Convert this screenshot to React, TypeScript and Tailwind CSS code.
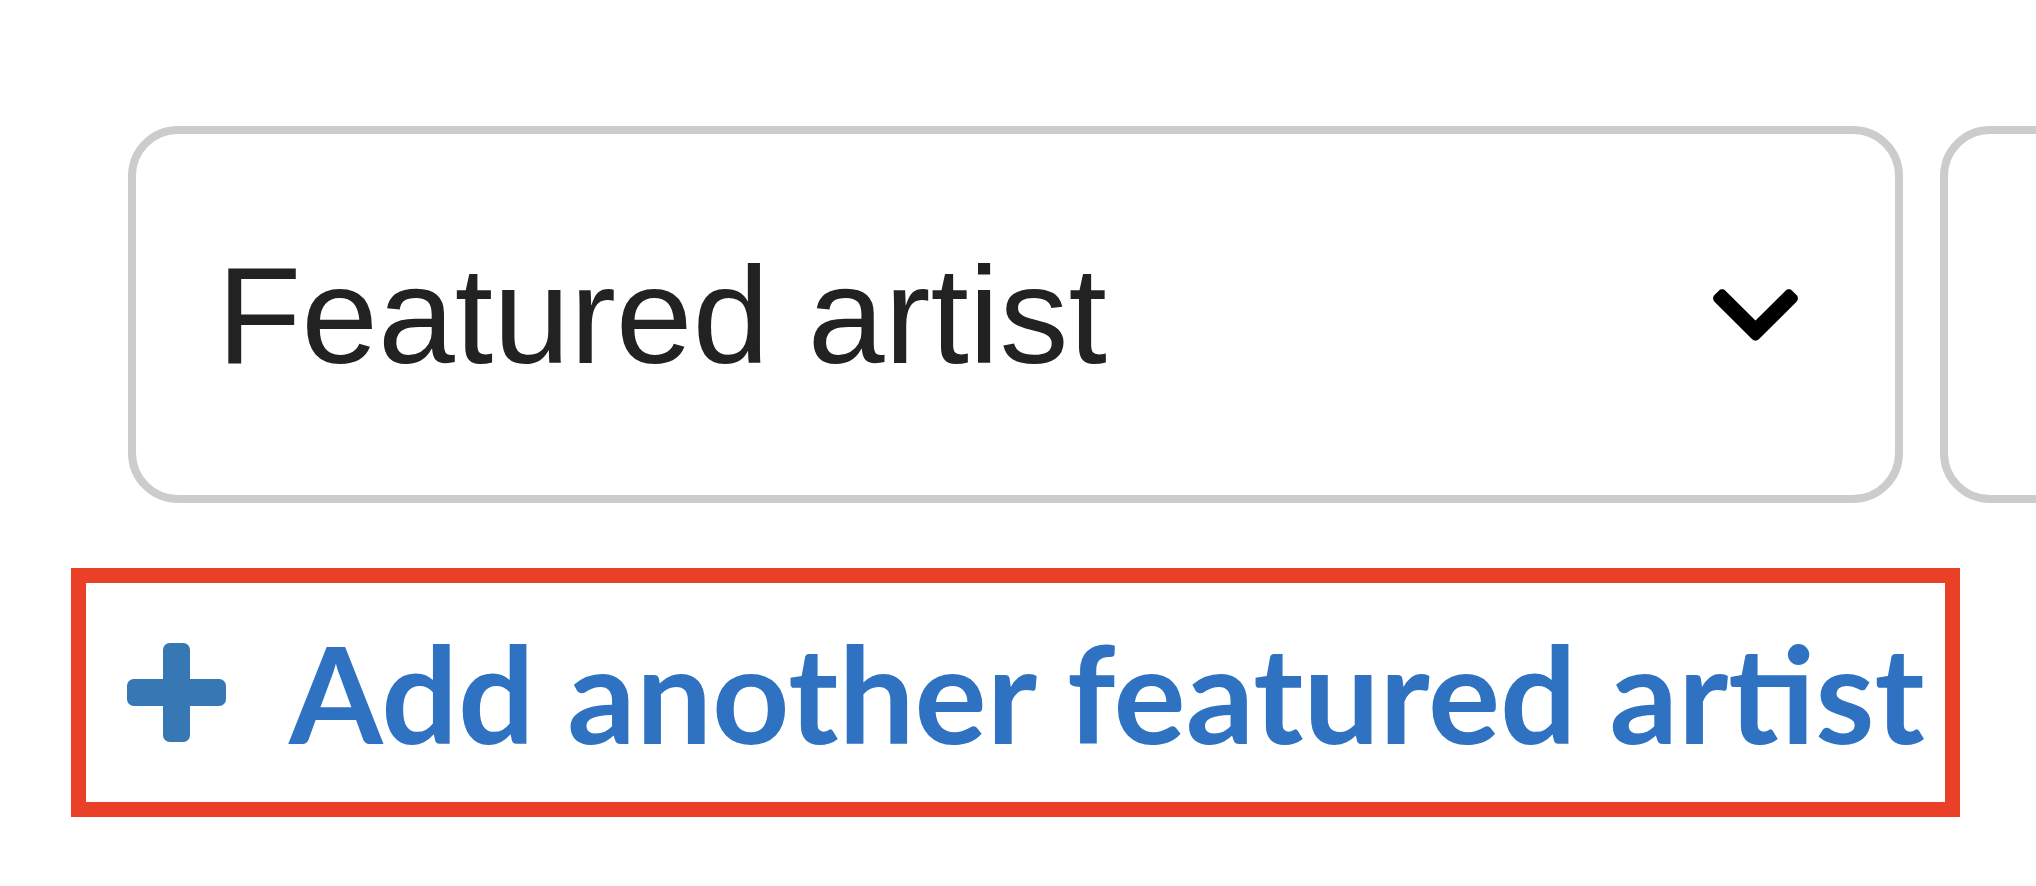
import React from "react";

function ChevronDown() {
  return (
    <svg viewBox="0 0 448 512" className="h-[100px] w-[87px] shrink-0" fill="#000">
      <path d="M207.029 381.476L12.686 187.132c-9.373-9.373-9.373-24.569 0-33.941l22.667-22.667c9.357-9.357 24.522-9.375 33.901-.04L224 284.505l154.745-154.021c9.379-9.335 24.544-9.317 33.901.04l22.667 22.667c9.373 9.373 9.373 24.569 0 33.941L240.971 381.476c-9.373 9.372-24.569 9.372-33.942 0z" />
    </svg>
  );
}

function PlusIcon() {
  return (
    <svg viewBox="0 192 1408 1408" className="h-[99px] w-[99px] shrink-0" fill="#3677b4">
      <path d="M1408 800v192q0 40-28 68t-68 28h-416v416q0 40-28 68t-68 28h-192q-40 0-68-28t-28-68v-416h-416q-40 0-68-28t-28-68v-192q0-40 28-68t68-28h416v-416q0-40 28-68t68-28h192q40 0 68 28t28 68v416h416q40 0 68 28t28 68z" />
    </svg>
  );
}

export default function App() {
  return (
    <div className="h-screen w-full overflow-hidden bg-white">
      {/* select row */}
      <div className="flex gap-[37px] pl-[128px] pt-[126px]">
        <div className="flex h-[377px] w-[1775px] shrink-0 items-center justify-between rounded-[50px] border-[8px] border-[#cccccc] bg-white pl-[81px] pr-[96px]">
          <span className="font-['Liberation_Sans',Arial,sans-serif] text-[138px] leading-none text-[#222222]">
            Featured artist
          </span>
          <ChevronDown />
        </div>
        <div className="h-[377px] w-[1775px] shrink-0 rounded-[50px] border-[8px] border-[#cccccc] bg-white" />
      </div>

      {/* add another button */}
      <div className="ml-[71px] mt-[65px] flex h-[249px] w-[1889px] items-center border-[15px] border-[#e94027] pl-[41px]">
        <button className="flex items-center gap-[63px] text-left">
          <PlusIcon />
          <span className="font-['Lato',sans-serif] text-[135px] font-bold leading-none text-[#3072c2]">
            Add another featured artist
          </span>
        </button>
      </div>
    </div>
  );
}
